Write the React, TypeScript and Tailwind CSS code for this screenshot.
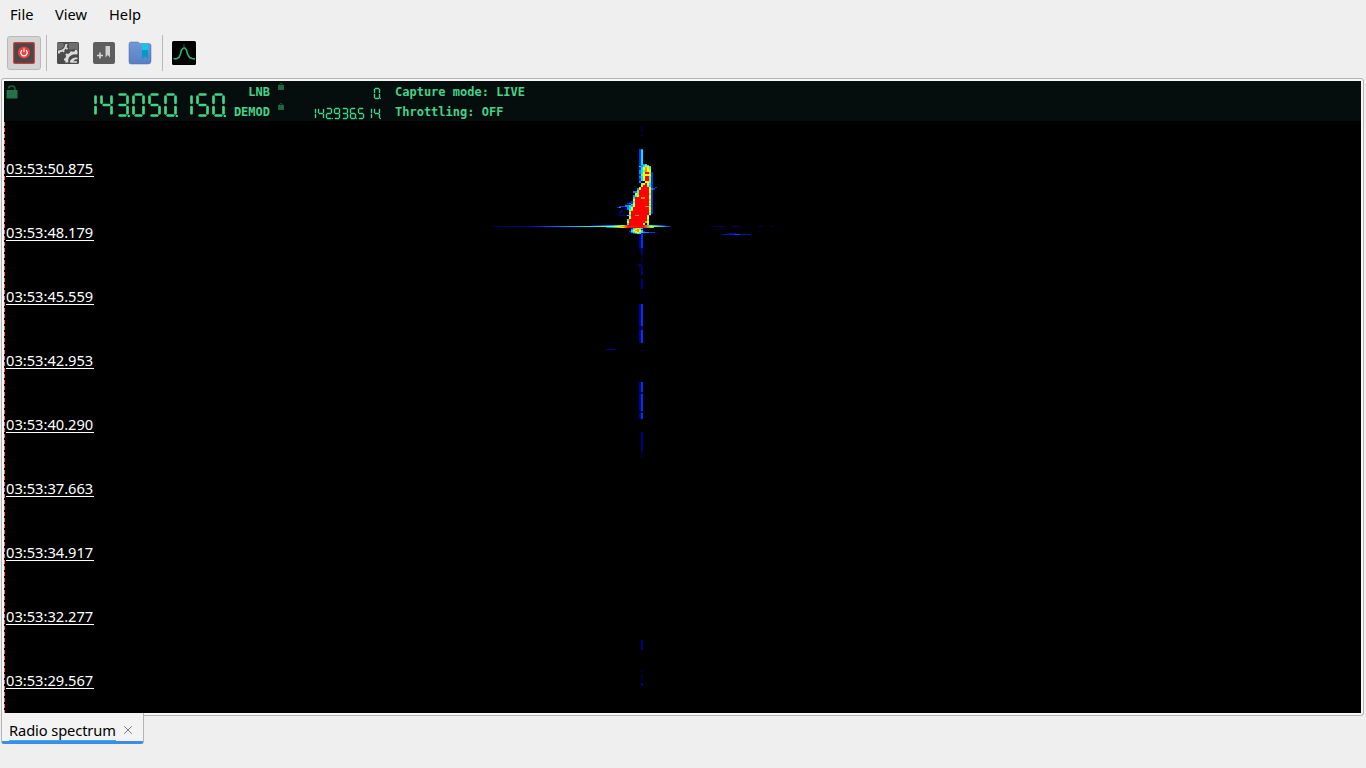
import { X } from "lucide-react"

const SEGMENTS: Record<string, string> = {
  "0": "abcdef",
  "1": "bc",
  "2": "abged",
  "3": "abgcd",
  "4": "fgbc",
  "5": "afgcd",
  "6": "afgedc",
  "7": "abc",
  "8": "abcdefg",
  "9": "abcdfg",
}

// Seven segment readout, each glyph is drawn in a (pitch x height) cell
function Lcd({ value, size }: { value: string; size: "lg" | "sm" }) {
  const lg = size === "lg"
  const pitch = lg ? 16 : 8
  const w = lg ? 10 : 5
  const h = lg ? 21 : 10
  const g = lg ? 2.2 : 0.9
  const lines: Record<string, number[]> = {
    a: [g, 0, w - g, 0],
    b: [w, g, w, h / 2 - g],
    c: [w, h / 2 + g, w, h - g],
    d: [g, h, w - g, h],
    e: [0, h / 2 + g, 0, h - g],
    f: [0, g, 0, h / 2 - g],
    g: [g, h / 2, w - g, h / 2],
  }
  const count = value.length
  return (
    <svg
      width={pitch * count}
      height={h + 4}
      viewBox={`-1.5 -1.5 ${pitch * count} ${h + 4}`}
      stroke="#43d389"
      strokeWidth={lg ? 2.7 : 1.4}
      strokeLinecap="round"
      aria-label={value}
    >
      {value.split("").map((digit, i) => (
        <g key={i} transform={`translate(${i * pitch} 0)`}>
          {SEGMENTS[digit].split("").map((s) => {
            const [x1, y1, x2, y2] = lines[s]
            return <line key={s} x1={x1} y1={y1} x2={x2} y2={y2} />
          })}
          {(count - i) % 3 === 1 && (
            <rect
              x={w + 0.2}
              y={h - 0.6}
              width={lg ? 2.2 : 1.2}
              height={lg ? 2.2 : 1.2}
              fill="#43d389"
              stroke="none"
            />
          )}
        </g>
      ))}
    </svg>
  )
}

function Padlock({ open = false }: { open?: boolean }) {
  if (open) {
    return (
      <svg width="12" height="14" viewBox="0 0 12 14">
        <path d="M2.5 3.5C3 .2 8.6.2 9 3.5V6" fill="none" stroke="#1c6040" strokeWidth="1.5" />
        <rect x="0.5" y="5" width="11" height="8.5" fill="#237249" />
      </svg>
    )
  }
  return (
    <svg width="6" height="7" viewBox="0 0 6 7">
      <path d="M1.5 3V1.6C1.5.3 4.5.3 4.5 1.6V3" fill="none" stroke="#1c5a3d" />
      <rect y="2" width="6" height="5" fill="#216342" />
    </svg>
  )
}

const PALETTE: Record<string, string> = {
  k: "#00003c",
  n: "#000090",
  b: "#0038e0",
  B: "#008cff",
  c: "#00e4ff",
  g: "#60ff80",
  y: "#f4ff00",
  o: "#ff9000",
  r: "#ff0000",
}

// [y, rows, one char per 2px bin starting at x = 617]
const ECHO: [number, number, string][] = [
  [126, 6, "............k"],
  [134, 2, "............k"],
  [149, 1, "...........bB"],
  [150, 14, "...........bc"],
  [164, 1, "...........bcBc"],
  [165, 1, "...........bBcgc"],
  [166, 1, "...........cBcyyc"],
  [167, 3, "...........bcyoyg"],
  [170, 2, "...........Bcgoyy"],
  [172, 2, "...........Bcyrrgb"],
  [174, 2, "...........bgyyyyb"],
  [176, 2, "...........Bcyrrgb"],
  [178, 3, "...........bcyrrgb"],
  [181, 2, "...........Bk.yygb"],
  [183, 2, "............gyrycb"],
  [185, 2, "............yrrgcb"],
  [187, 1, "...........grrrryb.b"],
  [188, 2, "..........ByrrrryBb"],
  [190, 1, "..........grrrrryb"],
  [191, 2, "........BBgrrrrryb"],
  [193, 2, ".........ygrrrrrgb"],
  [195, 2, "........Bgyrrrrryb"],
  [197, 2, "........crrroorryb"],
  [199, 2, "........yrrrrrrrgb"],
  [201, 2, "......nbgrrrrrrryb"],
  [203, 1, ".....bBbyrrrrrrrgb"],
  [204, 1, "....nn.cyrrrrrrryb"],
  [205, 1, "....BBcByrrrrrrrgb"],
  [206, 1, ".bbbBBccyrrrrroogb"],
  [207, 1, "bB...Bcyrrrrrrrryb"],
  [208, 2, "....nBcyrrrrrrrryb"],
  [210, 1, "..n...ygrrrrrrrrgb"],
  [211, 1, ".nn...crrrrrrrrryb"],
  [212, 2, ".n....yrrrrrrrrrgb"],
  [214, 1, "n.....grrrrrrrrry"],
  [215, 1, ".nnnnccrroorrrrgb"],
  [216, 3, "......yrrrrrrrry"],
  [219, 2, ".....crrrrrrrrrg"],
  [221, 2, ".....yrrrrrrrroy"],
  [223, 2, ".....crrrrrrrykg"],
  [228, 1, ".......bcgygcnn"],
  [229, 1, ".......Bgyogb"],
  [230, 1, ".......cyooyc"],
  [231, 1, "......bcgyoycb"],
  [232, 1, "......nBcyygcBBBbbbn"],
  [233, 1, "........bBgcnn"],
  [234, 14, "...........nb"],
  [248, 4, "...........kn"],
  [252, 3, "............n"],
  [257, 5, "............k"],
  [264, 3, "...........nk"],
  [267, 8, "............n"],
  [279, 10, "............n"],
  [297, 1, "............k"],
  [304, 8, "...........nb"],
  [312, 4, "...........nb"],
  [316, 10, "...........nb"],
  [326, 4, "...........kn"],
  [330, 13, "...........nb"],
  [350, 1, "............n"],
  [382, 10, "...........nb"],
  [392, 2, "...........kn"],
  [394, 17, "...........nb"],
  [411, 2, "............n"],
  [413, 6, "...........nb"],
  [432, 18, "............n"],
  [450, 8, "............k"],
  [640, 10, "............n"],
  [670, 2, "............k"],
  [674, 7, "............k"],
  [683, 3, "............n"],
]

// [x, y, width, height, color]
const SPLATTER: [number, number, number, number, string][] = [
  [606, 349, 10, 1, "#000088"],
  [609, 349, 5, 1, "#0000b8"],
  [711, 226, 10, 1, "#000040"],
  [719, 226, 7, 1, "#000070"],
  [732, 226, 8, 1, "#000060"],
  [758, 226, 6, 1, "#000050"],
  [770, 226, 4, 1, "#000040"],
  [722, 234, 29, 1, "#0010c0"],
  [728, 233, 8, 1, "#0000a8"],
  [734, 234, 6, 1, "#0048ff"],
]

function Waterfall() {
  return (
    <svg width="1357" height="592" viewBox="4 121 1357 592" shapeRendering="crispEdges">
      <defs>
        <linearGradient id="burst" gradientUnits="userSpaceOnUse" x1="493" y1="0" x2="673" y2="0">
          <stop offset="0" stopColor="#000050" />
          <stop offset="0.2" stopColor="#0000a0" />
          <stop offset="0.32" stopColor="#0050ff" />
          <stop offset="0.5" stopColor="#00e0ff" />
          <stop offset="0.62" stopColor="#50ff90" />
          <stop offset="0.7" stopColor="#f0ff00" />
          <stop offset="0.75" stopColor="#ff3000" />
          <stop offset="0.83" stopColor="#ff0000" />
          <stop offset="0.88" stopColor="#e0ff00" />
          <stop offset="0.94" stopColor="#00d0ff" />
          <stop offset="1" stopColor="#000090" />
        </linearGradient>
        <linearGradient id="skirt" gradientUnits="userSpaceOnUse" x1="590" y1="0" x2="666" y2="0">
          <stop offset="0" stopColor="#000060" />
          <stop offset="0.3" stopColor="#0090ff" />
          <stop offset="0.43" stopColor="#c0ff20" />
          <stop offset="0.5" stopColor="#ff0000" />
          <stop offset="0.7" stopColor="#ff0000" />
          <stop offset="0.8" stopColor="#40ffb0" />
          <stop offset="1" stopColor="#000080" />
        </linearGradient>
      </defs>
      <line x1="4.5" y1="122" x2="4.5" y2="713" stroke="#ff6666" strokeDasharray="4 2" />
      {ECHO.map(([y, rows, bins]) =>
        bins.split("").map((bin, i) =>
          bin === "." ? null : (
            <rect key={`${y}-${i}`} x={617 + i * 2} y={y} width="2" height={rows} fill={PALETTE[bin]} />
          )
        )
      )}
      <rect x="590" y="225" width="76" height="1" fill="url(#skirt)" />
      <rect x="493" y="226" width="178" height="1" fill="url(#burst)" />
      <rect x="606" y="227" width="48" height="1" fill="url(#skirt)" />
      {SPLATTER.map(([x, y, w, h, fill]) => (
        <rect key={`${x}-${y}`} x={x} y={y} width={w} height={h} fill={fill} />
      ))}
    </svg>
  )
}

const TIMESTAMPS = [
  "03:53:50.875",
  "03:53:48.179",
  "03:53:45.559",
  "03:53:42.953",
  "03:53:40.290",
  "03:53:37.663",
  "03:53:34.917",
  "03:53:32.277",
  "03:53:29.567",
]

function PowerIcon() {
  return (
    <svg width="24" height="24" viewBox="0 0 24 24">
      <rect x="1.7" y="1.7" width="20.6" height="20.6" rx="1" fill="#484848" stroke="#d83a3a" strokeWidth="1.2" />
      <circle cx="12" cy="11.5" r="6" fill="#f23b3b" />
      <path d="M10 9.2a3.2 3.2 0 1 0 4 0M12 7.5v3.6" fill="none" stroke="#fff" strokeWidth="1.2" />
    </svg>
  )
}

function GearsIcon() {
  return (
    <svg width="24" height="24" viewBox="0 0 24 24">
      <rect x="1" y="1" width="22" height="22" rx="1.5" fill="#4c4c4c" />
      <path d="M1 2h6l1 3-3 3-4 1zM13 2h9v7l-5-1-4 1z" fill="#6e6e6e" />
      {/* top left gear */}
      <path d="M2 10.5c4.5 0 8-3 8.5-7.5" fill="none" stroke="#d5d5d5" strokeWidth="2.2" />
      <path d="M3 10v2.500M6.500 9l1.500 2M9 6.500l2.500 1.500" stroke="#d5d5d5" strokeWidth="2" />
      {/* bottom right gear */}
      <path d="M11 21.500C9.500 15.500 14 11 21.500 12" fill="none" stroke="#ddd" strokeWidth="3" />
      <path d="M10.500 18.500H8M12 15l-2-2M15.500 12.500l-.5-2M20 11V9" stroke="#ddd" strokeWidth="2.200" />
      <path d="M14.500 21.500c.5-3 3.500-4.500 7-4M15 21l5-4M15 21h6" fill="none" stroke="#ddd" strokeWidth="1.600" />
    </svg>
  )
}

function AddBookmarkIcon() {
  return (
    <svg width="24" height="24" viewBox="0 0 24 24">
      <rect x="1" y="1" width="22" height="22" rx="2" fill="#5e5e5e" />
      <path d="M5 14.5h6M8 11.5v6" stroke="#d8d8d8" strokeWidth="1.6" />
      <path d="M13.5 5H18v11.5l-2.25-2.5-2.25 2.5z" fill="#d0d0d0" />
    </svg>
  )
}

function BookmarksIcon() {
  return (
    <svg width="24" height="24" viewBox="0 0 24 24">
      <defs>
        <linearGradient id="folder" x1="0" y1="0" x2="0" y2="1">
          <stop offset="0" stopColor="#7199d8" />
          <stop offset="1" stopColor="#577fc3" />
        </linearGradient>
      </defs>
      <path d="M1 3q0-2 2-2h7l2 1.5h9q2 0 2 2V20q0 3-3 3H3q-2 0-2-2z" fill="url(#folder)" stroke="#476aab" strokeWidth=".5" />
      <path d="M14 2.5h6v16l-3-3-3 3z" fill="#12c8e8" />
      <path d="M14 9h6v9.5l-3-3-3 3z" fill="#0899c2" />
    </svg>
  )
}

function SpectrumIcon() {
  return (
    <svg width="24" height="24" viewBox="0 0 24 24">
      <rect width="24" height="24" rx="1.5" fill="#000" />
      <path
        d="M1.5 17.5L4 18l3-1.500L8.500 13l1-4L11.500 7h1.500l1.500 2 1 4 2 3.500 2.500 1 3 .5"
        fill="none"
        stroke="#30b070"
        strokeWidth="1.6"
      />
      <path d="M12 3v4" stroke="#1c6844" />
    </svg>
  )
}

export default function App() {
  return (
    <div className="flex h-[768px] w-[1366px] flex-col overflow-hidden bg-[#efefef] font-['Noto_Sans',sans-serif] text-[14.67px] text-black">
      {/* Menu bar */}
      <nav className="flex h-[30px] items-center pb-[2px] pl-[10px]">
        <span className="w-[45px]">File</span>
        <span className="w-[54px]">View</span>
        <span>Help</span>
      </nav>

      {/* Toolbar */}
      <div className="flex h-12 items-center pb-[2px] pl-[7px]">
        <button className="flex size-[34px] items-center justify-center rounded-[3px] border border-[#b9b9b9] bg-[#d4d4d4]">
          <PowerIcon />
        </button>
        <div className="ml-[5px] h-9 w-px bg-[#b9b9b9]" />
        <div className="ml-[9px] flex gap-3">
          <GearsIcon />
          <AddBookmarkIcon />
          <BookmarksIcon />
        </div>
        <div className="ml-[10px] h-9 w-px bg-[#b9b9b9]" />
        <div className="ml-[9px]">
          <SpectrumIcon />
        </div>
      </div>

      {/* Main panel */}
      <div className="ml-px h-[638px] w-[1363px] shrink-0 rounded-[3px] border border-[#b4b4b4] bg-[#f6f6f6] p-[2px]">
        <div className="flex h-10 w-[1357px] bg-[#060d0d] font-['DejaVu_Sans_Mono',monospace] text-xs/[20px] font-bold text-[#43d389]">
          <div className="w-20 pt-1 pl-[2px]">
            <Padlock open />
          </div>
          <div className="w-[146px] pt-[11.5px]">
            <Lcd value="143050150" size="lg" />
          </div>
          <div className="w-10 pt-px text-right">
            <div>LNB</div>
            <div>DEMOD</div>
          </div>
          <div className="flex w-[38px] flex-col gap-[13px] pt-[2px] pl-2">
            <Padlock />
            <Padlock />
          </div>
          <div className="flex w-[73px] flex-col items-end gap-[6px] pt-[5.5px]">
            <Lcd value="0" size="sm" />
            <Lcd value="142936514" size="sm" />
          </div>
          <div className="pt-px pl-[14px]">
            <div>Capture mode: LIVE</div>
            <div>Throttling: OFF</div>
          </div>
        </div>

        <div className="relative h-[592px] w-[1357px] bg-black">
          <Waterfall />
          <div className="absolute top-[39px] left-[2px] flex flex-col gap-[47px] text-white">
            {TIMESTAMPS.map((time) => (
              <div key={time} className="h-[17px] w-[88px] border-b border-white leading-[16px]">
                {time}
              </div>
            ))}
          </div>
        </div>
      </div>

      {/* Tabs */}
      <div className="relative -mt-[3px] ml-px flex h-[31px] w-[143px] shrink-0 items-center rounded-b-[3px] border-r border-b-[3px] border-l border-r-[#b4b4b4] border-b-[#3a8ee6] border-l-[#b4b4b4] bg-[#f3f3f3] pl-[7px]">
        <span className="mt-[3px] h-[25px] w-[107px] border-b border-[#3daee9] leading-[29px] tracking-[-0.1px] whitespace-nowrap">
          Radio spectrum
        </span>
        <X className="mt-[5px] ml-[5px] text-[#666]" size={14} strokeWidth={1.5} />
      </div>
    </div>
  )
}
